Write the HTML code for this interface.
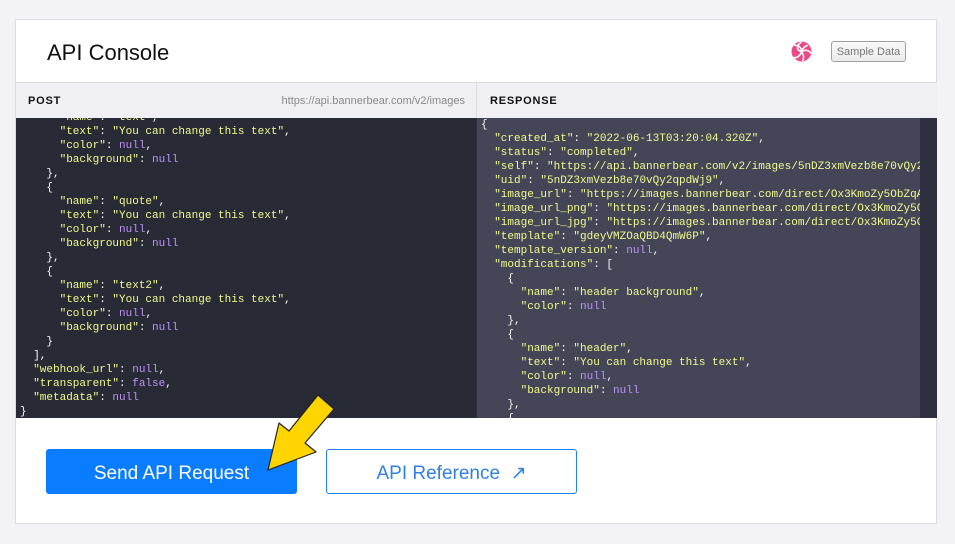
<!DOCTYPE html>
<html><head><meta charset="utf-8"><style>
*{margin:0;padding:0;box-sizing:border-box}
body{width:955px;height:544px;background:#f3f3f6;font-family:"Liberation Sans",sans-serif;position:relative;overflow:hidden}
.card{position:absolute;left:15px;top:19px;width:922px;height:505px;background:#fff;border:1px solid #dcdce2}
.title{position:absolute;left:31px;top:20px;font-size:22px;color:#111}
.sample{position:absolute;left:815px;top:21px;width:75px;height:21px;border:1px solid #a0a0a6;border-radius:3px;background:linear-gradient(#f8f8f8,#ececec);font-size:11px;color:#777;text-align:center;line-height:20px}
.ph{position:absolute;top:62px;height:37px;background:#f0f0f4;border-top:1px solid #dcdce2;font-size:11px;font-weight:bold;letter-spacing:.8px;color:#111;line-height:37px}
.code{position:absolute;top:98px;height:300px;overflow:hidden;font-family:"Liberation Mono",monospace;font-size:11px;line-height:14px;white-space:pre;color:#f8f8f2}
.s{color:#f1fa8c}.n{color:#bd93f9}
.btn1{position:absolute;left:30px;top:429px;width:251px;height:45px;background:#0a7cff;border-radius:3px;color:#fff;font-size:19px;text-align:center;line-height:50px}
.btn2{position:absolute;left:310px;top:429px;width:251px;height:45px;border:1px solid #1f7ef0;border-radius:3px;color:#2f7fe6;font-size:19px;text-align:center;line-height:48px}
</style></head><body>
<div class="card">
<div class="title">API Console</div>
<svg style="position:absolute;left:775px;top:21px" width="21" height="21" viewBox="0 0 20 20"><circle cx="10" cy="10" r="9.5" fill="#ec4a86"/><path d="M10 1C5 4 5 9 10 10M10 10c4-2 8-1 9 2M10 10c-1 4-5 7-8 5.5M3 4c4 0 7 2 7 6M16 4c-3 1-5 3-6 6M10 10c2 3 3 6 1 9" stroke="#fff" stroke-width="1.5" fill="none"/></svg>
<div class="sample">Sample Data</div>
<div class="ph" style="left:0;width:460px;padding-left:12px">POST<span style="position:absolute;right:11px;font-weight:normal;letter-spacing:0;color:#888;font-size:11px">https://api.bannerbear.com/v2/images</span></div>
<div class="ph" style="left:460px;width:461px;padding-left:13px;border-left:1px solid #dcdce2">RESPONSE</div>
<div class="code" style="left:0;width:460px;background:#282a36;padding:0 0 0 4px;top:98px"><div style="margin-top:-7px">      <span class="s">"name"</span>: <span class="s">"text"</span>,
      <span class="s">"text"</span>: <span class="s">"You can change this text"</span>,
      <span class="s">"color"</span>: <span class="n">null</span>,
      <span class="s">"background"</span>: <span class="n">null</span>
    },
    {
      <span class="s">"name"</span>: <span class="s">"quote"</span>,
      <span class="s">"text"</span>: <span class="s">"You can change this text"</span>,
      <span class="s">"color"</span>: <span class="n">null</span>,
      <span class="s">"background"</span>: <span class="n">null</span>
    },
    {
      <span class="s">"name"</span>: <span class="s">"text2"</span>,
      <span class="s">"text"</span>: <span class="s">"You can change this text"</span>,
      <span class="s">"color"</span>: <span class="n">null</span>,
      <span class="s">"background"</span>: <span class="n">null</span>
    }
  ],
  <span class="s">"webhook_url"</span>: <span class="n">null</span>,
  <span class="s">"transparent"</span>: <span class="n">false</span>,
  <span class="s">"metadata"</span>: <span class="n">null</span>
}</div></div>
<div class="code" style="left:460px;width:461px;background:#444657;padding:0 0 0 4px;border-left:1px solid #2e3040"><div style="margin-top:0">{
  <span class="s">"created_at"</span>: <span class="s">"2022-06-13T03:20:04.320Z"</span>,
  <span class="s">"status"</span>: <span class="s">"completed"</span>,
  <span class="s">"self"</span>: <span class="s">"https://api.bannerbear.com/v2/images/5nDZ3xmVezb8e70vQy2qpdWj9"</span>,
  <span class="s">"uid"</span>: <span class="s">"5nDZ3xmVezb8e70vQy2qpdWj9"</span>,
  <span class="s">"image_url"</span>: <span class="s">"https://images.bannerbear.com/direct/Ox3KmoZy5ObZqA"</span>,
  <span class="s">"image_url_png"</span>: <span class="s">"https://images.bannerbear.com/direct/Ox3KmoZy5ObZ"</span>,
  <span class="s">"image_url_jpg"</span>: <span class="s">"https://images.bannerbear.com/direct/Ox3KmoZy5ObZ"</span>,
  <span class="s">"template"</span>: <span class="s">"gdeyVMZOaQBD4QmW6P"</span>,
  <span class="s">"template_version"</span>: <span class="n">null</span>,
  <span class="s">"modifications"</span>: [
    {
      <span class="s">"name"</span>: <span class="s">"header background"</span>,
      <span class="s">"color"</span>: <span class="n">null</span>
    },
    {
      <span class="s">"name"</span>: <span class="s">"header"</span>,
      <span class="s">"text"</span>: <span class="s">"You can change this text"</span>,
      <span class="s">"color"</span>: <span class="n">null</span>,
      <span class="s">"background"</span>: <span class="n">null</span>
    },
    {</div><div style="position:absolute;right:0;top:0;width:17px;height:300px;background:#2e3040"></div></div>
<div class="btn1">Send API Request</div>
<div class="btn2">API Reference &nbsp;↗</div>
</div>
<svg style="position:absolute;left:0;top:0" width="955" height="544"><polygon points="318,395 334,409 305,443 316,452 268,470 279,423 289,431" fill="#ffd500" stroke="#222" stroke-width="1.2" stroke-linejoin="round"/></svg>
</body></html>
